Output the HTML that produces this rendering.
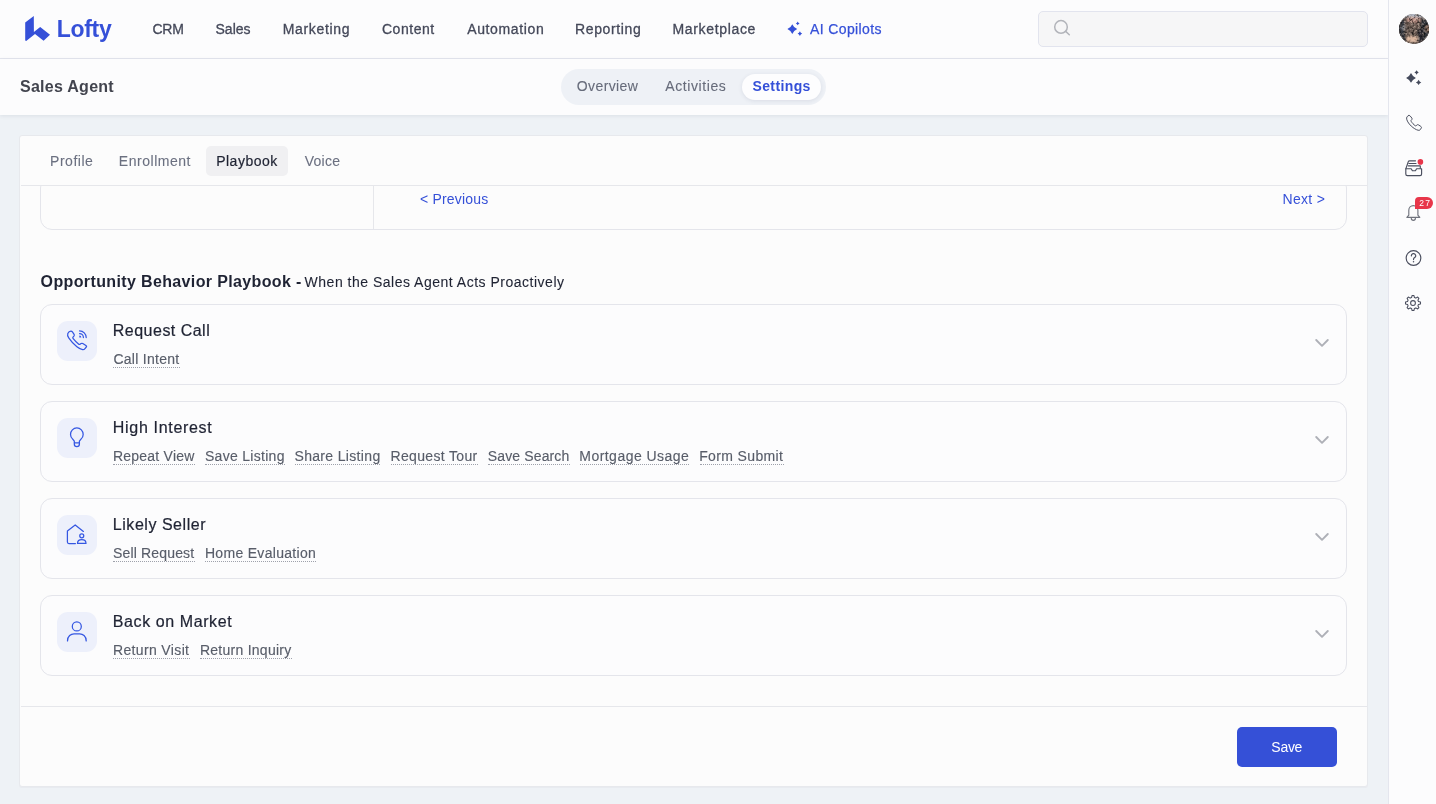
<!DOCTYPE html>
<html>
<head>
<meta charset="utf-8">
<title>Sales Agent</title>
<style>
*{box-sizing:border-box;margin:0;padding:0}
#tx{position:absolute;left:0;top:0;width:1436px;height:804px;will-change:transform}
html,body{width:1436px;height:804px;overflow:hidden}
body{font-family:"Liberation Sans",sans-serif;background:#eef2f6;position:relative;color:#1f2333}
.abs{position:absolute}
.t{position:absolute;white-space:nowrap;line-height:1}
svg{position:absolute;overflow:visible}
#nav{left:0;top:0;width:1388px;height:59px;background:#fcfcfd;border-bottom:1px solid #e4e6ee}
#side{left:1388px;top:0;width:48px;height:804px;background:#fcfcfd;border-left:1px solid #e4e6ee}
#sub{left:0;top:59px;width:1388px;height:56px;background:#fcfcfd;box-shadow:0 1px 4px rgba(30,40,70,.09)}
#seg{left:561px;top:69px;width:265px;height:36px;border-radius:18px;background:#eef1f6}
#segon{left:742px;top:74px;width:79px;height:26px;border-radius:13px;background:#fdfdfe;box-shadow:0 1px 4px rgba(40,50,90,.10)}
#card{left:19px;top:135px;width:1349px;height:652px;background:#fcfcfc;border:1px solid #e7e9ed;border-radius:3px;box-shadow:0 1px 0 rgba(228,230,235,.55)}
.row{left:40px;width:1307px;height:81px;border:1px solid #e4e5eb;border-radius:12px;background:#fcfcfd}
.ib{left:57px;width:40px;height:40px;border-radius:11px;background:#edf0fb}
.ul{position:absolute;height:0;border-top:1px dotted #9ea1ab}
.ic{fill:none;stroke:#3557e2;stroke-width:1.25;stroke-linecap:round;stroke-linejoin:round}
.sic{fill:none;stroke:#4a4e5e;stroke-width:1.15;stroke-linecap:round;stroke-linejoin:round}
.chev{fill:none;stroke:#aeb0b7;stroke-width:1.9;stroke-linecap:round;stroke-linejoin:round}
</style>
</head>
<body>
<!-- top nav -->
<div id="nav" class="abs"></div>
<svg style="left:0;top:0" width="60" height="58" viewBox="0 0 60 58"><path d="M25.2 22.4 L33.8 16.1 L33.9 32 L40.2 27 L50 34.7 L43.6 40.7 L35 34 L26.2 40.9 L25.2 40.5 Z" fill="#3550d8"/></svg>
<svg style="left:782px;top:19px" width="24" height="20" viewBox="782 19 24 20" fill="#3550d8"><path d="M792.30 24.15 Q793.77 27.58 797.20 29.05 Q793.77 30.52 792.30 33.95 Q790.83 30.52 787.40 29.05 Q790.83 27.58 792.30 24.15Z"/><path d="M797.70 21.50 Q798.23 22.87 799.60 23.40 Q798.23 23.93 797.70 25.30 Q797.17 23.93 795.80 23.40 Q797.17 22.87 797.70 21.50Z"/><path d="M799.90 31.30 Q800.54 32.96 802.20 33.60 Q800.54 34.24 799.90 35.90 Q799.26 34.24 797.60 33.60 Q799.26 32.96 799.90 31.30Z"/></svg>
<div class="abs" style="left:1038px;top:11px;width:330px;height:36px;border:1px solid #e2e4ee;border-radius:5px;background:#f6f6f7"></div>
<svg style="left:1050px;top:16px" width="24" height="24" viewBox="1050 16 24 24" fill="none" stroke="#b2b4ba" stroke-width="1.5" stroke-linecap="round"><circle cx="1061" cy="26.9" r="6.3"/><path d="M1065.7 31.4 L1069.3 34.8"/></svg>

<!-- sub header -->
<div id="sub" class="abs"></div>
<div id="seg" class="abs"></div>
<div id="segon" class="abs"></div>

<!-- right sidebar -->
<div id="side" class="abs"></div>
<svg style="left:1399px;top:14px" width="30" height="30" viewBox="0 0 30 30">
<defs><clipPath id="avc"><circle cx="15" cy="15" r="15"/></clipPath><filter id="avb" x="-20%" y="-20%" width="140%" height="140%"><feGaussianBlur stdDeviation=".8"/></filter>
<filter id="avn" x="0" y="0" width="100%" height="100%"><feTurbulence type="fractalNoise" baseFrequency=".38" numOctaves="2" seed="7"/><feColorMatrix type="matrix" values="0 0 0 0 0  0 0 0 0 0  0 0 0 0 0  2.5 0 0 0 -1.12"/><feGaussianBlur stdDeviation=".45"/></filter>
<filter id="avn2" x="0" y="0" width="100%" height="100%"><feTurbulence type="fractalNoise" baseFrequency=".42" numOctaves="2" seed="23"/><feColorMatrix type="matrix" values="0 0 0 0 .82  0 0 0 0 .66  0 0 0 0 .56  0 2.8 0 0 -1.3"/><feGaussianBlur stdDeviation=".45"/></filter></defs>
<g clip-path="url(#avc)"><rect width="30" height="30" fill="#6a5a52"/><g filter="url(#avb)">
<rect x="-2" y="-2" width="34" height="5.5" fill="#b4bac6"/>
<rect x="8" y="3.5" width="13" height="5" fill="#c4958a"/>
<rect x="-2" y="6" width="8" height="18" fill="#33343c"/>
<rect x="22" y="5" width="10" height="22" fill="#2e3037"/>
<rect x="26.5" y="12" width="4" height="5" fill="#a88570"/>
<rect x="3" y="12" width="3.5" height="3.5" fill="#9a9ba3"/>
<rect x="8" y="22" width="11" height="6" fill="#dcb8a0"/>
<rect x="18.5" y="15" width="4" height="14" fill="#25272d"/>
<rect x="2" y="23" width="6" height="6" fill="#3a3a40"/>
</g><rect width="30" height="30" fill="#23252c" filter="url(#avn)"/><rect width="30" height="30" filter="url(#avn2)" opacity=".55"/>
<rect x="8" y="22.5" width="10" height="4.5" rx="2" fill="#dcb8a0" opacity=".8" filter="url(#avb)"/></g></svg>
<!-- sparkle -->
<svg style="left:1400px;top:66px" width="26" height="24" viewBox="1400 66 26 24" fill="#454a5c"><path d="M1411.00 73.00 Q1412.47 76.43 1415.90 77.90 Q1412.47 79.37 1411.00 82.80 Q1409.53 79.37 1406.10 77.90 Q1409.53 76.43 1411.00 73.00Z"/><path d="M1416.60 70.30 Q1417.22 71.88 1418.80 72.50 Q1417.22 73.12 1416.60 74.70 Q1415.98 73.12 1414.40 72.50 Q1415.98 71.88 1416.60 70.30Z"/><path d="M1418.60 79.70 Q1419.36 81.64 1421.30 82.40 Q1419.36 83.16 1418.60 85.10 Q1417.84 83.16 1415.90 82.40 Q1417.84 81.64 1418.60 79.70Z"/></svg>
<!-- phone -->
<svg style="left:1398.58px;top:107.9px" width="30.4" height="30.4" viewBox="0 0 40 40"><path class="sic" style="stroke-width:1.3" d="M13 9.8 C12 9.8 10.2 11.4 10 13.2 C9.8 16 12.5 20.5 16.1 23.8 C19 26.5 22.5 28.6 25.2 29.3 C26.5 29.6 27.3 29.4 27.9 28.6 L29.3 26.4 C29.8 25.5 29.6 24.9 28.8 24.3 L25.6 22.2 C24.8 21.7 24.2 21.8 23.6 22.4 L22.6 23.3 C22.2 23.6 21.8 23.6 21.2 23.2 C19.5 22 17.2 19.6 16 17.6 C15.6 17 15.6 16.6 16 16.2 L16.9 15.2 C17.4 14.6 17.4 14 16.9 13.2 L14.8 10.6 C14.2 9.9 13.6 9.8 13 9.8Z"/></svg>
<!-- inbox -->
<svg style="left:1400px;top:155px" width="28" height="26" viewBox="1400 155 28 26"><path class="sic" d="M1405.9 168.6 L1408.3 161.6 Q1408.6 160.8 1409.5 160.8 L1415.5 160.8 M1409 163.5 L1416 163.5 M1408.3 165.8 L1420.3 165.8 M1420.3 166 L1420.3 168.2"/><path class="sic" d="M1405.8 168.7 H1411.2 L1412.4 170.7 H1415.4 L1416.6 168.7 H1421.6 V174 Q1421.6 175.6 1420 175.6 H1407.4 Q1405.8 175.6 1405.8 174 Z"/><circle cx="1420.4" cy="161.9" r="2.8" fill="#e8364a"/></svg>
<!-- bell -->
<svg style="left:1400px;top:195px" width="36" height="30" viewBox="1400 195 36 30"><path class="sic" style="stroke:#70737d" d="M1408.8 215.2 V210.2 A4.55 4.55 0 0 1 1417.9 210.2 V215.2 L1419.8 217.4 H1406.9 Z M1411.3 218.3 A2.05 2.05 0 0 0 1415.4 218.3"/></svg>
<div class="abs" style="left:1415px;top:197px;width:18px;height:12px;border-radius:4px 6px 6px 0;background:#e8364a"></div>
<!-- help -->
<svg style="left:1403px;top:248px" width="22" height="22" viewBox="1403 248 22 22"><circle class="sic" cx="1413.5" cy="258.05" r="7.35"/><path class="sic" d="M1411.4 256 A2.15 2.15 0 1 1 1414.6 257.6 Q1413.5 258.3 1413.5 259.6"/><circle cx="1413.5" cy="261.8" r=".75" fill="#4a4e5e"/></svg>
<!-- gear -->
<svg style="left:1403.1px;top:292.9px" width="20" height="20" viewBox="0 0 20 20"><path class="sic" style="stroke-width:1.05" d="M9.11 2.50 L10.89 2.50 L11.45 4.54 L12.84 5.11 L14.67 4.07 L15.93 5.33 L14.89 7.16 L15.46 8.55 L17.50 9.11 L17.50 10.89 L15.46 11.45 L14.89 12.84 L15.93 14.67 L14.67 15.93 L12.84 14.89 L11.45 15.46 L10.89 17.50 L9.11 17.50 L8.55 15.46 L7.16 14.89 L5.33 15.93 L4.07 14.67 L5.11 12.84 L4.54 11.45 L2.50 10.89 L2.50 9.11 L4.54 8.55 L5.11 7.16 L4.07 5.33 L5.33 4.07 L7.16 5.11 L8.55 4.54Z"/><circle class="sic" style="stroke-width:1.05" cx="10" cy="10" r="2.4"/></svg>

<!-- main card -->
<div id="card" class="abs"></div>
<div class="abs" style="left:206px;top:146px;width:82px;height:30px;border-radius:5px;background:#f0f0f2"></div>
<div class="abs" style="left:21px;top:185px;width:1346px;height:1px;background:#e6e7eb"></div>
<!-- partial inner card -->
<div class="abs" style="left:40px;top:176px;width:1307px;height:54px;border:1px solid #e4e5eb;border-radius:12px;clip-path:inset(10px 0 0 0)"></div>
<div class="abs" style="left:373px;top:186px;width:1px;height:43px;background:#e6e7eb"></div>

<!-- rows -->
<div class="abs row" style="top:304px"></div>
<div class="abs ib" style="top:321px"></div>
<svg style="left:57px;top:321px" width="40" height="40" viewBox="0 0 40 40"><path class="ic" d="M13.9 10.1 C12.8 10.1 11.4 11.2 10.8 12.6 C10.2 14 10.8 15.6 11.9 17.2 C13.5 19.6 16.5 23 19.9 25.8 C21.5 27.1 24 28.4 25.6 28.7 C26.6 28.9 27.4 28.3 28.2 27.3 L29.3 26 C29.8 25.3 29.6 24.9 28.9 24.5 L25.8 22.5 C25.1 22.1 24.6 22.2 24 22.6 L23.1 23.2 C22.5 23.6 22.1 23.5 21.5 23 C20 21.8 17.6 19.4 16 17.4 C15.6 16.9 15.6 16.6 16 16.1 L16.9 15.1 C17.5 14.4 17.5 14.1 17.1 13.4 L15.4 10.9 C15 10.3 14.5 10.1 13.9 10.1Z"/><path class="ic" d="M22.6 9.9 A6.6 6.6 0 0 1 29.2 16.5 M22.6 12.7 A3.8 3.8 0 0 1 26.4 16.5"/><path d="M22.3 14.6 A2 2 0 0 1 24.3 16.6 L22.3 16.6Z" fill="#3557e2"/></svg>
<svg class="chev" style="left:1315px;top:338px" width="14" height="10" viewBox="0 0 14 10"><path d="M1.2 2 L7 7.8 L12.8 2"/></svg>

<div class="abs row" style="top:401px"></div>
<div class="abs ib" style="top:418px"></div>
<svg style="left:57px;top:418px" width="40" height="40" viewBox="0 0 40 40"><path class="ic" d="M17.3 23.2 L17.3 26.1 A2.55 2.55 0 0 0 22.4 26.1 L22.4 23.2 L24.2 20.9 A6.32 6.32 0 1 0 15.5 20.9 Z M17.3 24.9 H22.4"/></svg>
<svg class="chev" style="left:1315px;top:435px" width="14" height="10" viewBox="0 0 14 10"><path d="M1.2 2 L7 7.8 L12.8 2"/></svg>

<div class="abs row" style="top:498px"></div>
<div class="abs ib" style="top:515px"></div>
<svg style="left:57px;top:515px" width="40" height="40" viewBox="0 0 40 40"><path class="ic" d="M26.4 16.4 L18.2 10 L10.4 15.9 L10.4 27 Q10.4 28.5 11.9 28.5 L18.4 28.5"/><circle class="ic" cx="24.75" cy="20.8" r="2"/><path class="ic" d="M20.5 28.4 C20.5 25.5 22.5 24.7 24.75 24.7 C27 24.7 29 25.5 29 28.4 Z"/></svg>
<svg class="chev" style="left:1315px;top:532px" width="14" height="10" viewBox="0 0 14 10"><path d="M1.2 2 L7 7.8 L12.8 2"/></svg>

<div class="abs row" style="top:595px"></div>
<div class="abs ib" style="top:612px"></div>
<svg style="left:57px;top:612px" width="40" height="40" viewBox="0 0 40 40"><circle class="ic" cx="19.8" cy="14.4" r="4.5"/><path class="ic" d="M10.5 28.9 C10.5 24 14 21.8 17 21.8 L22.7 21.8 C25.7 21.8 29.2 24 29.2 28.9"/></svg>
<svg class="chev" style="left:1315px;top:629px" width="14" height="10" viewBox="0 0 14 10"><path d="M1.2 2 L7 7.8 L12.8 2"/></svg>
<div class="ul" style="left:113.3px;top:367.0px;width:66.9px"></div><div class="ul" style="left:113.3px;top:464.0px;width:82.0px"></div><div class="ul" style="left:205.3px;top:464.0px;width:79.5px"></div><div class="ul" style="left:294.8px;top:464.0px;width:85.7px"></div><div class="ul" style="left:390.8px;top:464.0px;width:87.3px"></div><div class="ul" style="left:488.1px;top:464.0px;width:81.5px"></div><div class="ul" style="left:579.6px;top:464.0px;width:109.8px"></div><div class="ul" style="left:699.5px;top:464.0px;width:84.4px"></div><div class="ul" style="left:113.3px;top:561.0px;width:82.0px"></div><div class="ul" style="left:205.3px;top:561.0px;width:110.8px"></div><div class="ul" style="left:113.3px;top:658.0px;width:76.7px"></div><div class="ul" style="left:200.3px;top:658.0px;width:92.0px"></div>

<!-- footer -->
<div class="abs" style="left:21px;top:706px;width:1346px;height:1px;background:#e6e7eb"></div>
<div class="abs" style="left:1237px;top:727px;width:100px;height:40px;border-radius:5px;background:#3550d7"></div>

<div id="tx">
<span class="t" style="left:56.83px;top:18.00px;font-size:23px;font-weight:700;color:#3550d8;letter-spacing:-0.334px;">Lofty</span>
<span class="t" style="left:152.45px;top:22.00px;font-size:14px;font-weight:400;color:#444859;letter-spacing:-0.227px;-webkit-text-stroke:.3px">CRM</span>
<span class="t" style="left:215.46px;top:22.00px;font-size:14px;font-weight:400;color:#444859;letter-spacing:0.027px;-webkit-text-stroke:.3px">Sales</span>
<span class="t" style="left:282.65px;top:22.00px;font-size:14px;font-weight:400;color:#444859;letter-spacing:0.686px;-webkit-text-stroke:.3px">Marketing</span>
<span class="t" style="left:381.95px;top:22.00px;font-size:14px;font-weight:400;color:#444859;letter-spacing:0.542px;-webkit-text-stroke:.3px">Content</span>
<span class="t" style="left:467.18px;top:22.00px;font-size:14px;font-weight:400;color:#444859;letter-spacing:0.635px;-webkit-text-stroke:.3px">Automation</span>
<span class="t" style="left:575.05px;top:22.00px;font-size:14px;font-weight:400;color:#444859;letter-spacing:0.614px;-webkit-text-stroke:.3px">Reporting</span>
<span class="t" style="left:672.45px;top:22.00px;font-size:14px;font-weight:400;color:#444859;letter-spacing:0.665px;-webkit-text-stroke:.3px">Marketplace</span>
<span class="t" style="left:809.98px;top:22.00px;font-size:14px;font-weight:400;color:#3550d8;letter-spacing:0.380px;-webkit-text-stroke:.25px">AI Copilots</span>
<span class="t" style="left:19.99px;top:79.00px;font-size:16px;font-weight:700;color:#42444e;letter-spacing:0.270px;">Sales Agent</span>
<span class="t" style="left:576.81px;top:79.00px;font-size:14px;font-weight:400;color:#666b7a;letter-spacing:0.390px;-webkit-text-stroke:.1px">Overview</span>
<span class="t" style="left:665.28px;top:79.00px;font-size:14px;font-weight:400;color:#666b7a;letter-spacing:0.587px;-webkit-text-stroke:.1px">Activities</span>
<span class="t" style="left:752.44px;top:79.00px;font-size:14px;font-weight:700;color:#3550d8;letter-spacing:0.387px;">Settings</span>
<span class="t" style="left:50.05px;top:154.00px;font-size:14px;font-weight:400;color:#6b7080;letter-spacing:0.515px;-webkit-text-stroke:.1px">Profile</span>
<span class="t" style="left:118.85px;top:154.00px;font-size:14px;font-weight:400;color:#6b7080;letter-spacing:0.522px;-webkit-text-stroke:.1px">Enrollment</span>
<span class="t" style="left:216.15px;top:154.00px;font-size:14px;font-weight:400;color:#1f2333;letter-spacing:0.505px;-webkit-text-stroke:.2px">Playbook</span>
<span class="t" style="left:304.78px;top:154.00px;font-size:14px;font-weight:400;color:#6b7080;letter-spacing:0.232px;-webkit-text-stroke:.1px">Voice</span>
<span class="t" style="left:420.06px;top:192.00px;font-size:14px;font-weight:400;color:#3550d8;letter-spacing:0.176px;">&lt; Previous</span>
<span class="t" style="left:1282.55px;top:192.00px;font-size:14px;font-weight:400;color:#3550d8;letter-spacing:0.285px;">Next &gt;</span>
<span class="t" style="left:40.61px;top:274.00px;font-size:16px;font-weight:700;color:#1f2333;letter-spacing:0.366px;">Opportunity Behavior Playbook -</span>
<span class="t" style="left:304.61px;top:275.00px;font-size:14px;font-weight:400;color:#1f2333;letter-spacing:0.504px;-webkit-text-stroke:.1px">When the Sales Agent Acts Proactively</span>
<span class="t" style="left:112.84px;top:323.00px;font-size:16px;font-weight:400;color:#1f2333;letter-spacing:0.480px;-webkit-text-stroke:.22px">Request Call</span>
<span class="t" style="left:113.45px;top:352.00px;font-size:14px;font-weight:400;color:#585d69;letter-spacing:0.265px;-webkit-text-stroke:.15px">Call Intent</span>
<span class="t" style="left:112.84px;top:420.00px;font-size:16px;font-weight:400;color:#1f2333;letter-spacing:0.681px;-webkit-text-stroke:.22px">High Interest</span>
<span class="t" style="left:112.95px;top:449.00px;font-size:14px;font-weight:400;color:#585d69;letter-spacing:0.233px;-webkit-text-stroke:.15px">Repeat View</span>
<span class="t" style="left:204.96px;top:449.00px;font-size:14px;font-weight:400;color:#585d69;letter-spacing:0.291px;-webkit-text-stroke:.15px">Save Listing</span>
<span class="t" style="left:294.46px;top:449.00px;font-size:14px;font-weight:400;color:#585d69;letter-spacing:0.334px;-webkit-text-stroke:.15px">Share Listing</span>
<span class="t" style="left:390.45px;top:449.00px;font-size:14px;font-weight:400;color:#585d69;letter-spacing:0.340px;-webkit-text-stroke:.15px">Request Tour</span>
<span class="t" style="left:487.76px;top:449.00px;font-size:14px;font-weight:400;color:#585d69;letter-spacing:0.139px;-webkit-text-stroke:.15px">Save Search</span>
<span class="t" style="left:579.25px;top:449.00px;font-size:14px;font-weight:400;color:#585d69;letter-spacing:0.468px;-webkit-text-stroke:.15px">Mortgage Usage</span>
<span class="t" style="left:699.15px;top:449.00px;font-size:14px;font-weight:400;color:#585d69;letter-spacing:0.366px;-webkit-text-stroke:.15px">Form Submit</span>
<span class="t" style="left:112.84px;top:517.00px;font-size:16px;font-weight:400;color:#1f2333;letter-spacing:0.533px;-webkit-text-stroke:.22px">Likely Seller</span>
<span class="t" style="left:112.96px;top:546.00px;font-size:14px;font-weight:400;color:#585d69;letter-spacing:0.166px;-webkit-text-stroke:.15px">Sell Request</span>
<span class="t" style="left:204.95px;top:546.00px;font-size:14px;font-weight:400;color:#585d69;letter-spacing:0.304px;-webkit-text-stroke:.15px">Home Evaluation</span>
<span class="t" style="left:112.84px;top:614.00px;font-size:16px;font-weight:400;color:#1f2333;letter-spacing:0.588px;-webkit-text-stroke:.22px">Back on Market</span>
<span class="t" style="left:112.95px;top:643.00px;font-size:14px;font-weight:400;color:#585d69;letter-spacing:0.360px;-webkit-text-stroke:.15px">Return Visit</span>
<span class="t" style="left:199.95px;top:643.00px;font-size:14px;font-weight:400;color:#585d69;letter-spacing:0.259px;-webkit-text-stroke:.15px">Return Inquiry</span>
<span class="t" style="left:1271.36px;top:740.00px;font-size:14px;font-weight:400;color:#ffffff;letter-spacing:-0.304px;">Save</span>
<span class="t" style="left:1419.28px;top:199.00px;font-size:8.5px;font-weight:400;color:#ffffff;letter-spacing:1.263px;">27</span>
</div>
</body>
</html>
